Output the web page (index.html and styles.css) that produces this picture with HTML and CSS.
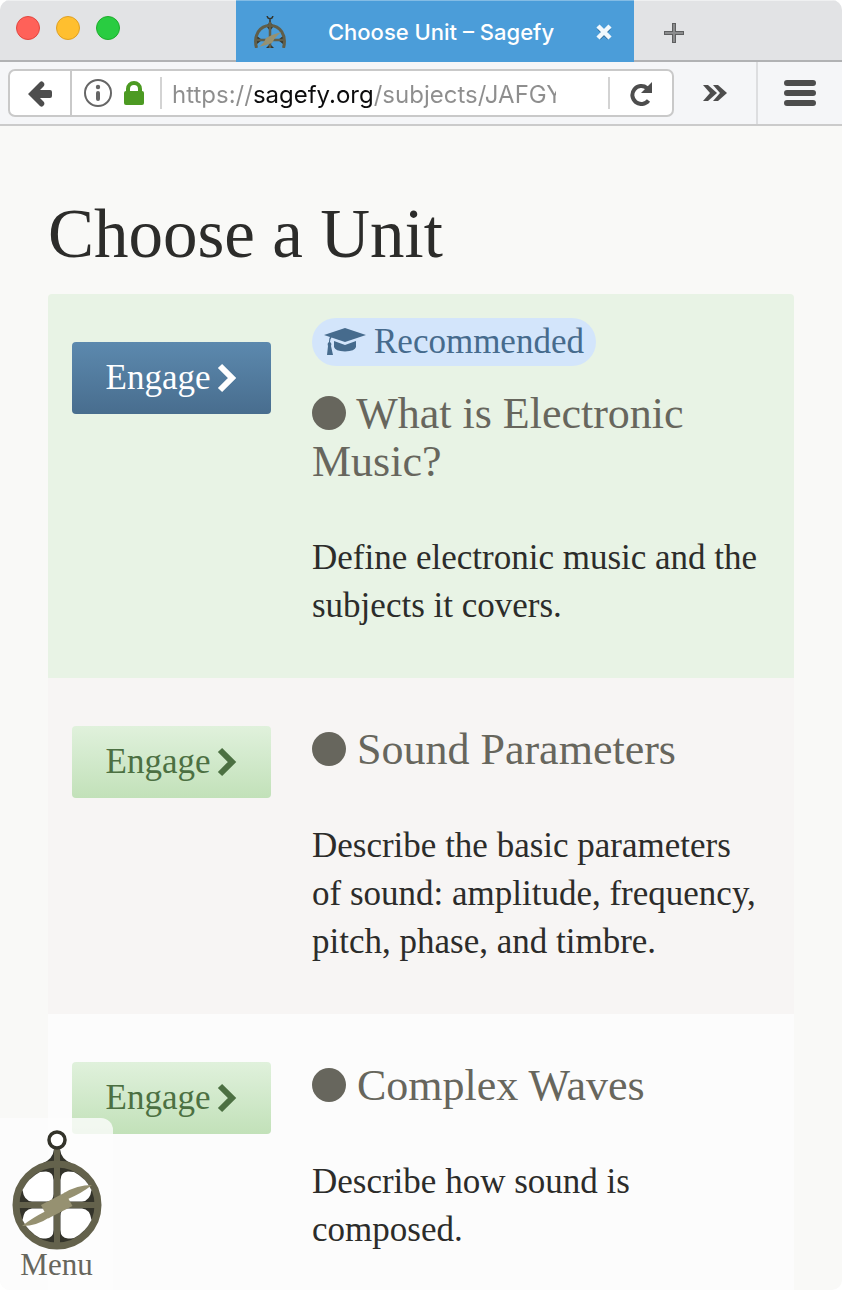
FILE: index.html
```html
<!DOCTYPE html>
<html lang="en">
<head>
<meta charset="utf-8">
<meta name="viewport" content="width=device-width, initial-scale=1">
<title>Choose Unit – Sagefy</title>
<link rel="stylesheet" href="styles.css">
</head>
<body>
<div class="window">
  <header class="tabbar">
    <div class="lights">
      <button class="light light-close" aria-label="Close window"></button>
      <button class="light light-min" aria-label="Minimize window"></button>
      <button class="light light-max" aria-label="Zoom window"></button>
    </div>
    <div class="tab">
      <svg class="favicon" viewBox="0 0 32 32" width="32" height="32" aria-hidden="true">
        <path d="M13 0l1 2 2 1 2-1 1-2M16 3v5" fill="none" stroke="#33332a" stroke-width="1.500"/>
        <path d="M12 10l4-4 4 4zM3 20v8l5-4zM29 20v8l-5-4zM12 32l4-4 4 4zM13 11h6l-3 4z" fill="#33332a"/>
        <path d="M2.500 32C-1 19 6 9.500 16 9.500S33 19 29.500 32" fill="none" stroke="#605e49" stroke-width="3"/>
        <path d="M16 6v26M2 24h28" stroke="#605e49" stroke-width="2.500"/>
        <path d="M5 31l5-5 2-4 6-3 9-3-6 6-3 5-6 2z" fill="#969171"/>
      </svg>
      <span class="tab-title">Choose Unit – Sagefy</span>
      <button class="icon-btn" aria-label="Close tab">
        <svg viewBox="0 0 16 16" width="16" height="16"><path d="M3 4l10 10M13 4L3 14" stroke="#2f668f" stroke-width="4.500"/><path d="M2 2l12 12M14 2L2 14" stroke="#f1f8fd" stroke-width="4.500"/></svg>
      </button>
    </div>
    <button class="icon-btn new-tab" aria-label="New tab">
      <svg viewBox="0 0 20 20" width="20" height="20"><path d="M10 0v20M0 10h20" stroke="#5e5f60" stroke-width="4"/><path d="M10 1v18M1 10h18" stroke="#8b8c8d" stroke-width="2"/></svg>
    </button>
  </header>

  <nav class="toolbar" aria-label="Browser">
    <div class="urlbar">
      <button class="icon-btn back" aria-label="Back">
        <svg viewBox="0 0 24 26" width="24" height="26"><path d="M0 13L12 1Q14-1 16 2 17 4 15.500 5.500L12 9H22Q24 9 24 11V15Q24 17 22 17H12L15.500 20.500Q17 22 16 24 14 27 12 25z" fill="#4d4d4d"/></svg>
      </button>
      <button class="icon-btn info" aria-label="Site information">
        <svg viewBox="0 0 28 28" width="28" height="28"><circle cx="14" cy="14" r="13" fill="none" stroke="#666" stroke-width="2"/><circle cx="14" cy="8" r="2.200" fill="#666"/><rect x="12" y="12" width="4" height="10" rx="2" fill="#666"/></svg>
      </button>
      <svg class="lock" viewBox="0 0 20 24" width="20" height="24" role="img" aria-label="Secure connection"><path d="M4 11V8a6 6 0 0 1 12 0v3" fill="none" stroke="#4c9a22" stroke-width="4"/><rect y="10" width="20" height="14" rx="2" fill="#4c9a22"/></svg>
      <span class="rule"></span>
      <input class="url" type="text" aria-label="Address" value="https://sagefy.org/subjects/JAFGY" spellcheck="false">
      <span class="rule"></span>
      <button class="icon-btn reload" aria-label="Reload">
        <svg viewBox="0 0 22 24" width="22" height="24"><path d="M18.500 18.500A9 9 0 1 1 17 6" fill="none" stroke="#4d4d4d" stroke-width="4"/><path d="M22 0v11H11z" fill="#4d4d4d"/></svg>
      </button>
    </div>
    <button class="icon-btn more" aria-label="More tools">
      <svg viewBox="0 0 24 16" width="24" height="16"><path d="M0 0h5l9 8-9 8H0l7-8zM10 0h5l9 8-9 8h-5l7-8z" fill="#4d4d4d"/></svg>
    </button>
    <button class="icon-btn hamburger" aria-label="Open menu">
      <svg viewBox="0 0 32 26" width="32" height="26"><path d="M3 3h26M3 13h26M3 23h26" stroke="#4d4d4d" stroke-width="6" stroke-linecap="round"/></svg>
    </button>
  </nav>

  <main class="page">
    <h1 class="page-title">Choose a Unit</h1>
    <ul class="units">
      <li class="unit unit-recommended">
        <button class="engage engage-primary">Engage <svg viewBox="0 0 20 30" width="20" height="30" aria-hidden="true"><path d="M3 3l12 12L3 27" fill="none" stroke="currentColor" stroke-width="6"/></svg></button>
        <div class="unit-body">
          <span class="badge"><svg viewBox="0 0 42 28" width="42" height="28" aria-hidden="true"><path d="M0 7L21 0l21 7-21 7L7.500 9.500Q6 11 6 14q2 1 1 4l2 9H3l1-9q-1-3 1-4 0-4 1-5z" fill="currentColor"/><path d="M10 13l11 4 11-4v6q-1 4-11 4.500Q11 23 10 19z" fill="currentColor"/></svg> Recommended</span>
          <h2 class="unit-title"><span class="dot"></span> What is Electronic Music?</h2>
          <p class="unit-text">Define electronic music and the subjects it covers.</p>
        </div>
      </li>
      <li class="unit unit-alt">
        <button class="engage">Engage <svg viewBox="0 0 20 30" width="20" height="30" aria-hidden="true"><path d="M3 3l12 12L3 27" fill="none" stroke="currentColor" stroke-width="6"/></svg></button>
        <div class="unit-body">
          <h2 class="unit-title"><span class="dot"></span> Sound Parameters</h2>
          <p class="unit-text">Describe the basic parameters of sound: amplitude, frequency, pitch, phase, and timbre.</p>
        </div>
      </li>
      <li class="unit">
        <button class="engage">Engage <svg viewBox="0 0 20 30" width="20" height="30" aria-hidden="true"><path d="M3 3l12 12L3 27" fill="none" stroke="currentColor" stroke-width="6"/></svg></button>
        <div class="unit-body">
          <h2 class="unit-title"><span class="dot"></span> Complex Waves</h2>
          <p class="unit-text">Describe how sound is composed.</p>
        </div>
      </li>
    </ul>
  </main>

  <button class="menu">
    <svg viewBox="0 0 90 120" width="90" height="120" aria-hidden="true">
      <defs><path id="pane" d="M28 42Q31 41.500 34 41.500 41.500 42 41.500 50V64Q41.500 71.500 35 71.500H20Q12 71 10.500 60A40 40 0 0 1 28 42z"/></defs>
      <path d="M42 19h6q1 10 11 14v4H31v-4q10-4 11-14z" fill="#33332a"/>
      <circle cx="45" cy="75" r="40" fill="#33332a"/>
      <path d="M45 18v98M5 75h80" stroke="#64624c" stroke-width="6"/>
      <circle cx="45" cy="75" r="41" fill="none" stroke="#64624c" stroke-width="7"/>
      <g fill="#fff">
        <use href="#pane"/>
        <use href="#pane" transform="matrix(-1 0 0 1 90 0)"/>
        <use href="#pane" transform="matrix(1 0 0 -1 0 150)"/>
        <use href="#pane" transform="matrix(-1 0 0 -1 90 150)"/>
      </g>
      <path d="M52 63Q65 55 80 55 70 63 56 69z" fill="#969171"/>
      <path d="M38 87Q25 96 10 96 20 88 34 81z" fill="#969171"/>
      <path d="M29 75L53 62.500 60.500 76 36 88.500z" fill="#969171"/>
      <circle cx="45" cy="10" r="8" fill="#fff" stroke="#33332a" stroke-width="3.500"/>
    </svg>
    <span>Menu</span>
  </button>
</div>
</body>
</html>
```

FILE: styles.css
```css
* {
  box-sizing: border-box;
}

body {
  margin: 0;
  background: #fff;
}

button {
  margin: 0;
  padding: 0;
  border: 0;
  background: none;
  font: inherit;
  color: inherit;
}

.window {
  position: relative;
  display: flex;
  flex-direction: column;
  height: 100vh;
  overflow: hidden;
  border-radius: 10px;
  background: #f9f9f7;
  font-family: Inter, Roboto, sans-serif;
}

.icon-btn {
  display: flex;
  flex: none;
  align-items: center;
  justify-content: center;
}

/* Tab strip */
.tabbar {
  display: flex;
  flex: none;
  height: 62px;
  background: #e2e3e5;
  box-shadow: inset 0 -2px #b1b2b4, inset 0 1px #eff0f1;
}

.lights {
  display: flex;
  flex: none;
  gap: 16px;
  width: 236px;
  padding: 16px;
}

.light {
  width: 24px;
  height: 24px;
  border: 1px solid #e2463f;
  border-radius: 50%;
  background: #ff6159;
}

.light-min {
  border-color: #dfa023;
  background: #ffbf2f;
}

.light-max {
  border-color: #1dad2b;
  background: #29cc41;
}

.tab {
  display: flex;
  flex: 0 1 398px;
  align-items: center;
  min-width: 0;
  padding: 2px 22px 0 18px;
  background: #4b9dd9;
  box-shadow: inset 0 1px #83bce5;
}

.favicon {
  flex: none;
}

.tab-title {
  flex: 1;
  overflow: hidden;
  color: #fff;
  font-size: 22px;
  font-weight: 500;
  text-align: center;
  white-space: nowrap;
}

.new-tab {
  width: 80px;
  padding-top: 4px;
}

/* Toolbar */
.toolbar {
  display: flex;
  flex: none;
  align-items: center;
  height: 64px;
  padding-left: 8px;
  border-bottom: 2px solid #cbcbcb;
  background: #f5f6f8;
}

.urlbar {
  display: flex;
  flex: 1;
  align-items: center;
  min-width: 0;
  height: 48px;
  border: 2px solid #c9c9c9;
  border-radius: 7px;
  background: #fff;
}

.back {
  align-self: stretch;
  width: 62px;
  padding-top: 2px;
  border-right: 2px solid #c9c9c9;
}

.info {
  margin: 0 12px;
}

.lock {
  flex: none;
}

.rule {
  flex: none;
  width: 2px;
  height: 32px;
  margin-left: 16px;
  background: #d3d3d3;
}

.url {
  flex: 1;
  min-width: 0;
  margin: 0 36px 0 10px;
  padding: 4px 0 0;
  border: 0;
  background: linear-gradient(to right, #8e8e8e 82px, #0c0c0d 82px, #0c0c0d 202px, #8e8e8e 202px);
  background-clip: text;
  color: transparent;
  font: 24px/32px Inter, Roboto, sans-serif;
}

.reload {
  width: 62px;
  padding-top: 2px;
}

.more {
  width: 82px;
}

.hamburger {
  align-self: stretch;
  width: 86px;
  border-left: 2px solid #dddee0;
}

/* Page */
.page {
  flex: 1;
  min-height: 0;
  overflow: hidden;
  padding: 72px 48px 0;
  color: #2c2c2a;
  font: 35px/48px "Liberation Serif", serif;
}

.page-title {
  margin: 0 0 24px;
  font-size: 69px;
  font-weight: 400;
  line-height: 72px;
}

.units {
  margin: 0;
  padding: 0;
  overflow: hidden;
  border-radius: 4px;
  list-style: none;
}

.unit {
  display: flex;
  align-items: flex-start;
  gap: 41px;
  padding: 48px 32px 48px 24px;
  background: #fcfcfc;
}

.unit-alt {
  background: #f7f5f4;
}

.unit-recommended {
  background: #e8f3e5;
}

.unit-recommended .unit-body {
  margin-top: -24px;
}

.engage {
  display: flex;
  flex: none;
  align-items: center;
  justify-content: center;
  gap: 7px;
  width: 199px;
  height: 72px;
  border-radius: 4px;
  background: linear-gradient(#e0f1dc, #c2e1b9);
  color: #4c7042;
}

.engage-primary {
  background: linear-gradient(#5c89ae, #486d8e);
  color: #fff;
}

.unit-body {
  flex: 1;
  min-width: 0;
}

.badge {
  display: inline-flex;
  align-items: center;
  gap: 8px;
  margin-bottom: 24px;
  padding: 0 12px;
  border-radius: 24px;
  background: #d3e5fb;
  color: #466b8d;
  vertical-align: top;
}

.unit-title {
  margin: 0 0 48px;
  color: #67665d;
  font-size: 44px;
  font-weight: 400;
  line-height: 48px;
}

.dot {
  display: inline-block;
  width: 34px;
  height: 34px;
  border-radius: 50%;
  background: #67665d;
  vertical-align: -2px;
}

.unit-text {
  margin: 0;
}

/* Floating site menu */
.menu {
  position: absolute;
  bottom: 0;
  left: 0;
  display: flex;
  flex-direction: column;
  align-items: center;
  width: 113px;
  padding: 12px 0 10px;
  border-radius: 0 12px 0 0;
  background: rgba(252, 252, 252, 0.8);
  color: #67665d;
  font: 31px/30px "Liberation Serif", serif;
}
```
